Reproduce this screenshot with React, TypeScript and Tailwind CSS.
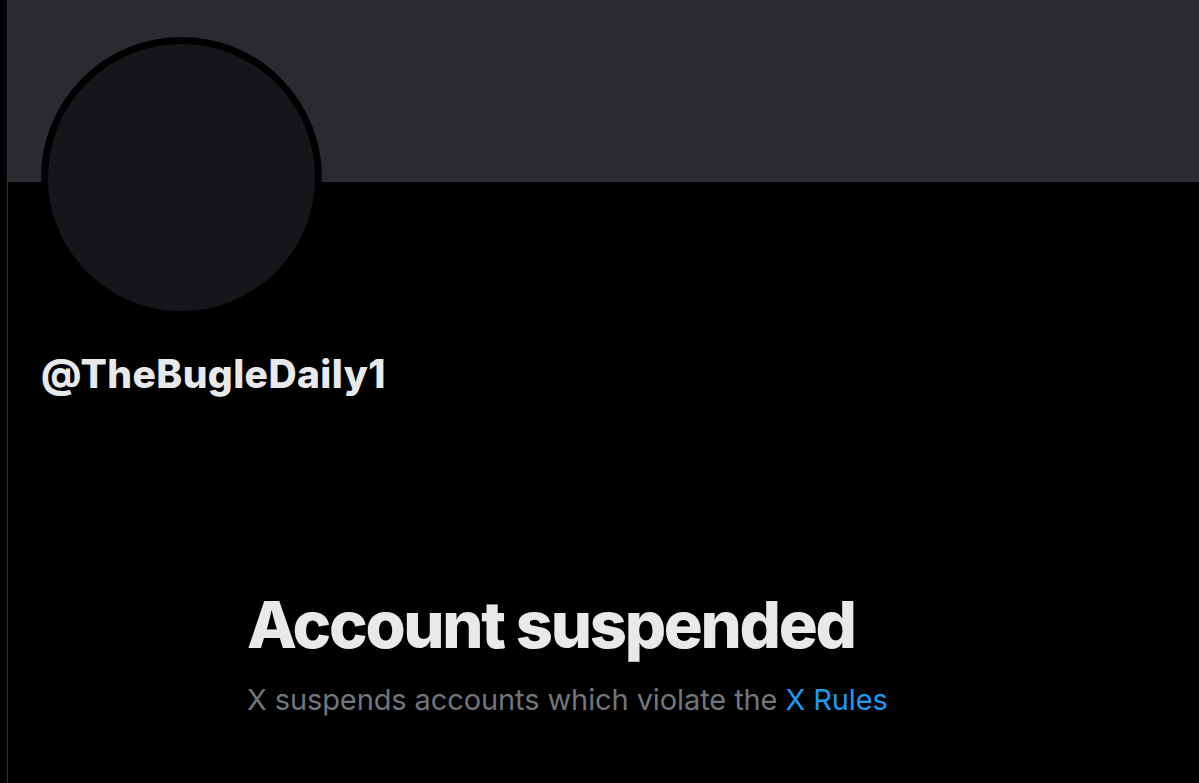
export default function App() {
  return (
    <div className="flex h-[783px] w-[1199px] overflow-hidden bg-black font-['Inter',sans-serif]">
      {/* left rail edge */}
      <div className="w-[7px] shrink-0 bg-black" />
      <div className="w-px shrink-0 bg-[#2f3033]" />

      <main className="flex min-w-0 flex-1 flex-col">
        <div className="h-[182px] shrink-0 bg-[#2a2b30]" />

        <div className="relative px-[33px]">
          {/* avatar overlaps banner */}
          <div className="-mt-[145px] h-[281px] w-[281px] rounded-full border-[7px] border-black bg-[#15161a]" />
          <div className="mt-[32px] text-[39px] leading-[48px] font-extrabold tracking-[0.4px] text-[#e7e9ea]">
            @TheBugleDaily1
          </div>
        </div>

        <section className="mt-[187px] pl-[239px]">
          <h1 className="text-[65px] leading-[80px] font-extrabold tracking-[-2.3px] text-[#e7e9ea]">
            Account suspended
          </h1>
          <p className="mt-[17px] text-[29px] leading-[36px] tracking-[-0.1px] text-[#71767b]">
            X suspends accounts which violate the <a className="text-[#1d9bf0]">X Rules</a>
          </p>
        </section>
      </main>
    </div>
  );
}
